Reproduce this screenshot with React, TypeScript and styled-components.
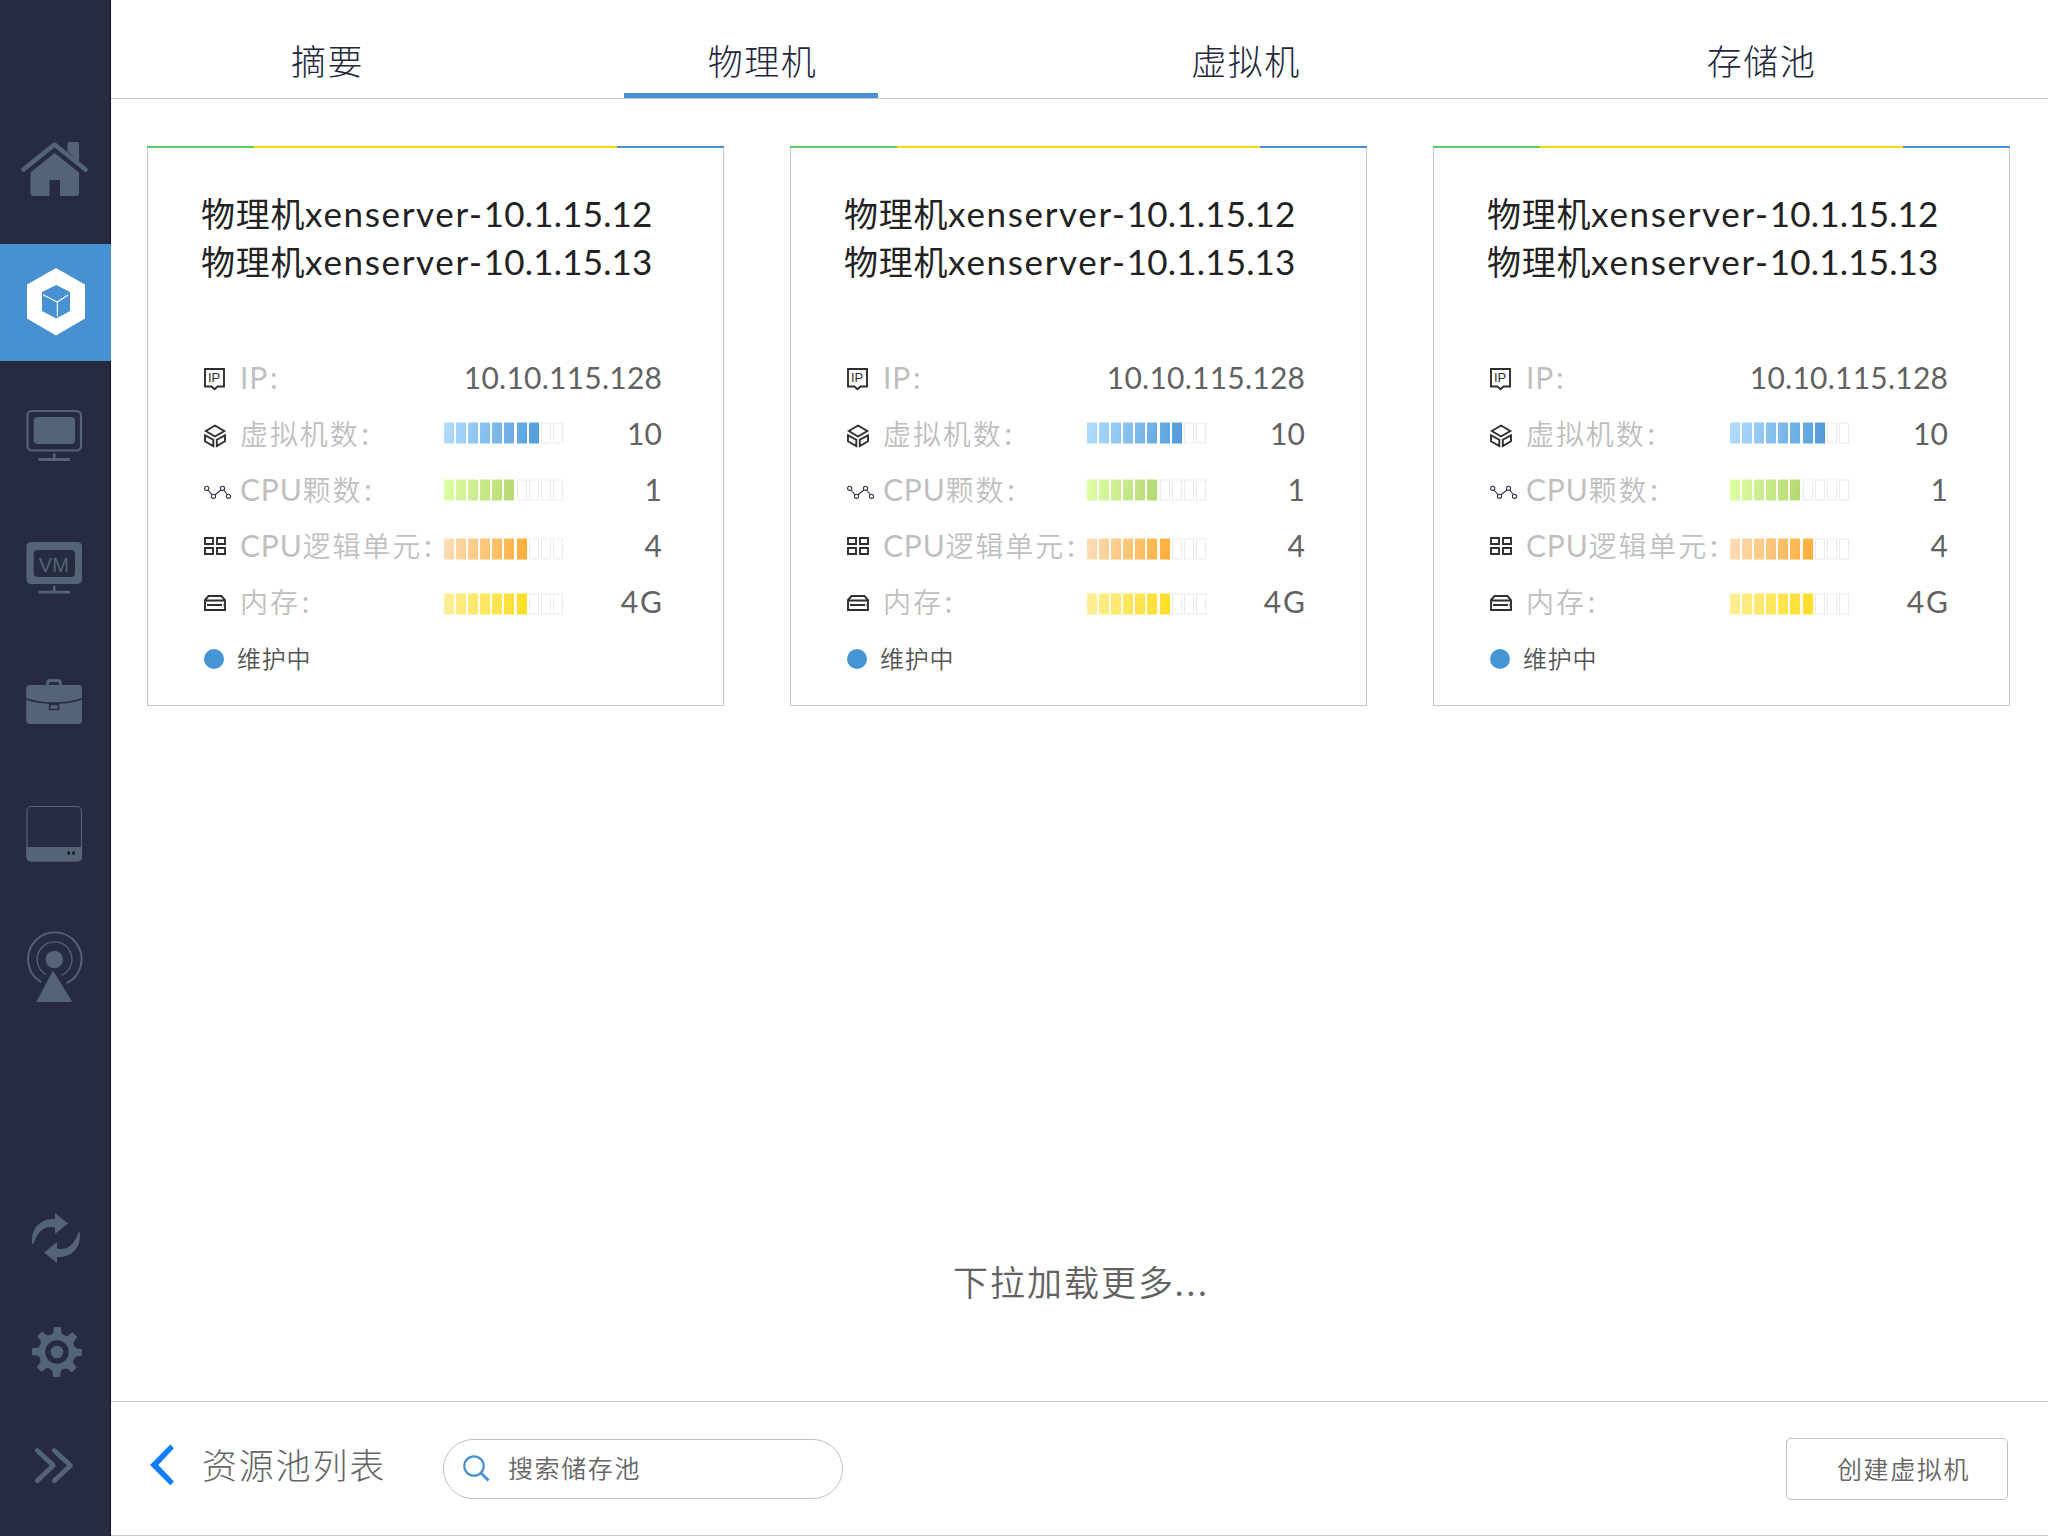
import React from 'react';
import styled, { createGlobalStyle } from 'styled-components';

const SLATE = '#546474';
const NAVY = '#262b40';
const BLUE = '#4791d3';
const LINE = '#c8c8c8';
const INK = '#2f2f2f';

const GlobalStyle = createGlobalStyle`
  * { box-sizing: border-box; }
  body {
    margin: 0;
    background: #fff;
    font-family: Lato, 'Noto Sans CJK SC', sans-serif;
    font-weight: 300;
  }
  svg { display: block; }
`;

const Screen = styled.div`
  display: flex;
  width: 2048px;
  height: 1536px;
  overflow: hidden;
`;

const Sidebar = styled.nav`
  display: flex;
  flex-direction: column;
  width: 111px;
  padding-top: 110px;
  background: linear-gradient(to right, ${NAVY} 110px, #10123a 110px);
`;

const NavItem = styled.a<{ $height: number; $active?: boolean }>`
  display: block;
  height: ${p => p.$height}px;
  background: ${p => (p.$active ? BLUE : 'transparent')};
`;

const Spacer = styled.div`
  flex: 1;
`;

const Main = styled.main`
  display: flex;
  flex-direction: column;
  flex: 1;
`;

const Tabs = styled.header`
  display: flex;
  height: 99px;
  padding-left: 88px;
  border-bottom: 1px solid ${LINE};
`;

const Tab = styled.button<{ $active?: boolean; $before: number; $indent?: number }>`
  width: 254px;
  margin-left: ${p => p.$before}px;
  padding: 27px 0 0 ${p => p.$indent ?? 0}px;
  border: 0;
  border-bottom: 5px solid ${p => (p.$active ? BLUE : 'transparent')};
  background: none;
  color: #23283c;
  font: 300 35px/40px 'Noto Sans CJK SC', sans-serif;
  letter-spacing: 1.5px;
  white-space: nowrap;
`;

const Content = styled.section`
  display: flex;
  flex-direction: column;
  justify-content: space-between;
  flex: 1;
  padding: 47px 38px 95px 36px;
`;

const Cards = styled.div`
  display: flex;
  gap: 66px;
`;

const Card = styled.article`
  width: 577px;
  height: 560px;
  border: 1px solid ${LINE};
  border-top-width: 0;
`;

const Stripe = styled.div`
  height: 2px;
  margin: 0 -1px;
  background: linear-gradient(to right, #58cf5e 107px, #ffd90a 107px 470px, ${BLUE} 470px);
`;

const Title = styled.h2`
  margin: 0;
  padding: 41px 0 0 53px;
  color: #222;
  font-family: 'Noto Sans CJK SC', sans-serif;
  font-size: 34px;
  font-weight: 400;
  line-height: 48px;
  letter-spacing: 0.7px;
  white-space: nowrap;
`;

const Latin = styled.span<{ $size: number; $spacing?: number }>`
  font-family: Lato, sans-serif;
  font-size: ${p => p.$size}px;
  font-weight: 400;
  line-height: 0;
  letter-spacing: ${p => p.$spacing ?? 0}px;
`;

const Stats = styled.div`
  padding: 64px 61px 0 56px;
`;

const Row = styled.div`
  display: grid;
  grid-template-columns: 36px 204px 1fr auto;
  align-items: center;
  height: 56px;
`;

const Label = styled.span`
  color: #bfbfbf;
  font-family: 'Noto Sans CJK SC', sans-serif;
  font-size: 28px;
  font-weight: 350;
  line-height: 56px;
  letter-spacing: 1.9px;
  white-space: nowrap;
`;

const Colon = styled(Latin)`
  margin-left: 2px;
`;

const Value = styled.span<{ $spacing?: number }>`
  margin-right: -${p => p.$spacing ?? 0.25}px;
  color: #626262;
  font-family: Lato, sans-serif;
  font-size: 30px;
  font-weight: 400;
  line-height: 56px;
  letter-spacing: ${p => p.$spacing ?? 0.25}px;
`;

const Meter = styled.div<{ $shift: number }>`
  display: flex;
  gap: 2px;
  height: 21px;
  transform: translateY(${p => p.$shift}px);
`;

const Cell = styled.i<{ $fill?: string }>`
  width: 10px;
  height: 21px;
  background: ${p => p.$fill ?? '#fff'};
  border: ${p => (p.$fill ? '0' : '1px solid #ebebeb')};
  &:nth-child(7) { margin-left: 1px; }
`;

const Status = styled.div`
  display: flex;
  align-items: center;
  gap: 13px;
  padding-left: 56px;
  height: 60px;
  color: #555;
  font-family: 'Noto Sans CJK SC', sans-serif;
  font-size: 24px;
  font-weight: 350;
  letter-spacing: 0.8px;
`;

const Dot = styled.span`
  width: 20px;
  height: 20px;
  border-radius: 50%;
  background: #4494d6;
`;

const Raised = styled.span<{ $by: number }>`
  padding-bottom: ${p => p.$by * 2}px;
`;

const LoadMore = styled.p`
  margin: 0;
  padding-left: 806px;
  color: #626262;
  font-family: 'Noto Sans CJK SC', sans-serif;
  font-size: 35px;
  font-weight: 350;
  line-height: 50px;
  letter-spacing: 2px;
`;

const Footer = styled.footer`
  display: flex;
  align-items: center;
  height: 135px;
  padding: 0 40px 0 39px;
  border-top: 1px solid ${LINE};
  border-bottom: 1px solid ${LINE};
`;

const Back = styled.a`
  display: flex;
  align-items: center;
  gap: 28px;
  width: 293px;
  padding-bottom: 8px;
  color: #666;
  font-family: 'Noto Sans CJK SC', sans-serif;
  font-size: 35px;
  line-height: 50px;
  letter-spacing: 1.8px;
`;

const Search = styled.label`
  display: flex;
  align-items: center;
  gap: 18px;
  width: 400px;
  height: 60px;
  padding-left: 19px;
  border: 1px solid #c0c0c0;
  border-radius: 30px;
  color: #666;
  font-family: 'Noto Sans CJK SC', sans-serif;
  font-size: 25px;
  font-weight: 350;
  letter-spacing: 1.6px;
`;

const Create = styled.button`
  width: 222px;
  height: 62px;
  margin-left: auto;
  padding: 0 0 2px 50px;
  border: 1px solid #c0c0c0;
  border-radius: 5px;
  background: none;
  color: #666;
  font: 350 25px/56px 'Noto Sans CJK SC', sans-serif;
  letter-spacing: 1.6px;
  text-align: left;
`;

/* Sidebar drawings share one coordinate space; `top` is where each slot starts. */
const Glyph = ({ top, height, children }: { top: number; height: number; children: React.ReactNode }) => (
  <svg width="111" height={height} viewBox={`0 ${top} 111 ${height}`} fill={SLATE}>
    {children}
  </svg>
);

const gearTeeth = [0, 45, 90, 135, 180, 225, 270, 315];
const syncArrow = 'M55 1213L68 1223.500L55 1234V1227.300C42 1225.500 37 1234 33.500 1243.800H32.200C30.500 1228 41 1218 55 1219Z';

const glyphs = {
  home: (
    <>
      <path d="M23.5 169.500L54.500 144.500L85.500 169.500" fill="none" stroke={SLATE} strokeWidth="4.600" strokeLinecap="round" strokeLinejoin="round" />
      <path d="M67.500 151V143.500Q67.500 142 69 142H77Q79 142 79 144V162Z" />
      <path d="M54.500 153L79 172.500V193.500Q79 196 76.500 196H60V180H49.500V196H33Q30.500 196 30.500 193.500V172.500Z" />
    </>
  ),
  pool: (
    <>
      <path d="M56 268L85 284.500V318.500L56 335.500L27 318.500V284.500Z" fill="#fff" />
      <path d="M56.300 285L70 292V311L56.300 318.500L42 311V292Z" fill={BLUE} />
      <path d="M43 294.700L57.300 302L68 295M57.300 302V316.500" fill="none" stroke="#fff" strokeWidth="1.100" />
    </>
  ),
  monitor: (
    <>
      <rect x="27.500" y="411" width="53.500" height="39.500" rx="4.500" fill="none" stroke={SLATE} strokeWidth="2.200" />
      <rect x="33.700" y="417" width="41.300" height="27" rx="4" />
      <path d="M53 453.500H55.500V458H70V461H38.500V458H53Z" />
    </>
  ),
  vm: (
    <>
      <path fillRule="evenodd" d="M31.500 542H77Q82 542 82 547V579Q82 584 77 584H31.500Q26.500 584 26.500 579V547Q26.500 542 31.500 542ZM37.700 550Q33.700 550 33.700 554V573Q33.700 577 37.700 577H71Q75 577 75 573V554Q75 550 71 550Z" />
      <path d="M53 586H55.500V590.700H70V593.500H38.500V590.700H53Z" />
      <text x="38.800" y="572" fontFamily="Liberation Sans, sans-serif" fontSize="20" fontWeight="400">VM</text>
    </>
  ),
  briefcase: (
    <>
      <path d="M47.500 686V683.500Q47.500 680.500 50.500 680.500H57.500Q60.500 680.500 60.500 683.500V686" fill="none" stroke={SLATE} strokeWidth="2.800" />
      <rect x="26.200" y="685" width="55.800" height="39" rx="3" />
      <path d="M26 699Q54 707.500 82 699" fill="none" stroke={NAVY} strokeWidth="1.800" />
      <path d="M49.700 704.500H58.500V709.500H49.700Z" stroke={NAVY} strokeWidth="1.700" />
    </>
  ),
  drive: (
    <>
      <rect x="27" y="806.500" width="54.500" height="54.500" rx="4.500" fill="none" stroke={SLATE} strokeWidth="1.200" />
      <path d="M26.400 847H82V857Q82 861.500 77.500 861.500H31Q26.400 861.500 26.400 857Z" />
      <path d="M67.500 851.500H70V854.500H67.500ZM72.300 851.500H74.800V854.500H72.300Z" fill="#11151f" />
    </>
  ),
  antenna: (
    <>
      <circle cx="54.300" cy="959.500" r="8.700" />
      <path d="M46 974.500A17.400 17.400 0 1 1 61.500 975.300" fill="none" stroke={SLATE} strokeWidth="1.300" />
      <path d="M41.300 982.300A26.800 26.800 0 1 1 66.700 983.200" fill="none" stroke={SLATE} strokeWidth="1.900" />
      <path d="M53 970.500L72.300 1002H36.200Z" />
    </>
  ),
  sync: (
    <>
      <path d={syncArrow} />
      <path transform="rotate(180 56 1238)" d={syncArrow} />
    </>
  ),
  gear: (
    <>
      {gearTeeth.map(a => (
        <path key={a} transform={`rotate(${a} 57 1352)`} d="M53.700 1328Q53.700 1327 54.700 1327H60Q61 1327 61 1328L61.300 1332Q61.700 1334.500 65 1335.500L60 1342H54L49 1335.500Q53 1334.500 53.400 1332Z" />
      ))}
      <circle cx="57" cy="1352" r="14.700" fill="none" stroke={SLATE} strokeWidth="6" />
      <circle cx="57" cy="1352" r="11.700" fill={NAVY} />
      <circle cx="57" cy="1352" r="6.300" />
    </>
  ),
  expand: (
    <path d="M37.300 1450.500L53.300 1465.500L37.300 1480.700M54.300 1450.500L70.500 1465.500L54.300 1480.700" fill="none" stroke={SLATE} strokeWidth="4.800" strokeLinecap="round" strokeLinejoin="round" />
  ),
};

const upperNav: { key: keyof typeof glyphs; top: number; height: number }[] = [
  { key: 'home', top: 110, height: 134 },
  { key: 'pool', top: 244, height: 117 },
  { key: 'monitor', top: 361, height: 139 },
  { key: 'vm', top: 500, height: 136 },
  { key: 'briefcase', top: 636, height: 134 },
  { key: 'drive', top: 770, height: 130 },
  { key: 'antenna', top: 900, height: 134 },
];

const lowerNav: typeof upperNav = [
  { key: 'sync', top: 1190, height: 100 },
  { key: 'gear', top: 1290, height: 110 },
  { key: 'expand', top: 1400, height: 136 },
];

const RowIcon = ({ children }: { children: React.ReactNode }) => (
  <svg width="28" height="32" viewBox="0 0 28 32" fill="none" stroke={INK} strokeWidth="1.900">
    {children}
  </svg>
);

const rowIcons = {
  ip: (
    <RowIcon>
      <path d="M1 8H20V25.500H13.500L10.500 28.300L7.500 25.500H1Z" />
      <text x="4" y="21.300" fill={INK} stroke="none" fontFamily="Liberation Sans, sans-serif" fontSize="13" fontWeight="400">IP</text>
    </RowIcon>
  ),
  vm: (
    <RowIcon>
      <path d="M11 8.500L20.300 14L11 19.500L1.800 14Z M1 18.300L9.300 22.700V29L1 24.300Z M21 18.300L12.800 22.700V29L21 24.300Z" />
    </RowIcon>
  ),
  cpu: (
    <RowIcon>
      <g stroke="#30364e" strokeWidth="1.100">
        <circle cx="2.700" cy="15.300" r="2.100" />
        <circle cx="9.500" cy="23.300" r="2.100" />
        <circle cx="18.500" cy="15.300" r="2.100" />
        <circle cx="24.500" cy="23.300" r="2.100" />
        <path d="M4 17L8 21.700M11 21.700L17 17M19.700 17L23.300 21.500" />
      </g>
    </RowIcon>
  ),
  units: (
    <RowIcon>
      <path d="M1 9H9V15H1ZM13 9H21V15H13ZM1 19H9V25H1ZM13 19H21V25H13Z" />
    </RowIcon>
  ),
  memory: (
    <RowIcon>
      <path d="M1 15L4.500 11H17.500L21 15V25H1ZM1 15.500H21M3 20H18M19.500 20H21" />
    </RowIcon>
  ),
};

interface Stat {
  icon: keyof typeof rowIcons;
  latin?: string;
  text?: string;
  value: string;
  spacing?: number;
  meter?: { from: number[]; to: number[]; filled: number; shift: number };
}

const stats: Stat[] = [
  { icon: 'ip', latin: 'IP', value: '10.10.115.128' },
  { icon: 'vm', text: '虚拟机数', value: '10', meter: { from: [178, 221, 255], to: [80, 155, 217], filled: 8, shift: -0.5 } },
  { icon: 'cpu', latin: 'CPU', text: '颗数', value: '1', meter: { from: [221, 255, 165], to: [179, 217, 115], filled: 6, shift: 0.5 } },
  { icon: 'units', latin: 'CPU', text: '逻辑单元', value: '4', meter: { from: [253, 221, 184], to: [253, 174, 56], filled: 7, shift: 3.5 } },
  { icon: 'memory', text: '内存', value: '4G', spacing: 2, meter: { from: [255, 238, 152], to: [255, 222, 34], filled: 7, shift: 2.5 } },
];

const tone = (from: number[], to: number[], t: number) =>
  `rgb(${from.map((c, i) => Math.round(c + (to[i] - c) * t)).join(',')})`;

const cellFill = (m: NonNullable<Stat['meter']>, i: number) =>
  i < m.filled
    ? `linear-gradient(100deg, ${tone(m.from, m.to, i / m.filled)}, ${tone(m.from, m.to, (i + 1) / m.filled)})`
    : undefined;

const HostCard = () => (
  <Card>
    <Stripe />
    <Title>
      {['10.1.15.12', '10.1.15.13'].map(ip => (
        <div key={ip}>
          物理机<Latin $size={35} $spacing={1.65}>xenserver-</Latin><Latin $size={35} $spacing={0.2}>{ip}</Latin>
        </div>
      ))}
    </Title>
    <Stats>
      {stats.map(s => (
        <Row key={s.icon}>
          {rowIcons[s.icon]}
          <Label>
            {s.latin && <Latin $size={30} $spacing={0.8}>{s.latin}</Latin>}
            {s.text}
            <Colon $size={30}>:</Colon>
          </Label>
          {s.meter ? (
            <Meter $shift={s.meter.shift}>
              {Array.from({ length: 10 }, (_, i) => (
                <Cell key={i} $fill={cellFill(s.meter!, i)} />
              ))}
            </Meter>
          ) : (
            <span />
          )}
          <Value $spacing={s.spacing}>{s.value}</Value>
        </Row>
      ))}
    </Stats>
    <Status><Dot /><Raised $by={2}>维护中</Raised></Status>
  </Card>
);

export default function App() {
  return (
    <>
      <GlobalStyle />
      <Screen>
        <Sidebar>
          {upperNav.map(n => (
            <NavItem key={n.key} $height={n.height} $active={n.key === 'pool'}>
              <Glyph top={n.top} height={n.height}>{glyphs[n.key]}</Glyph>
            </NavItem>
          ))}
          <Spacer />
          {lowerNav.map(n => (
            <NavItem key={n.key} $height={n.height}>
              <Glyph top={n.top} height={n.height}>{glyphs[n.key]}</Glyph>
            </NavItem>
          ))}
        </Sidebar>
        <Main>
          <Tabs>
            <Tab $before={0} $indent={3}>摘要</Tab>
            <Tab $before={171} $indent={23} $active>物理机</Tab>
            <Tab $before={241}>虚拟机</Tab>
            <Tab $before={261} $indent={1}>存储池</Tab>
          </Tabs>
          <Content>
            <Cards>
              <HostCard />
              <HostCard />
              <HostCard />
            </Cards>
            <LoadMore>下拉加载更多<Latin $size={35} $spacing={3.4}>...</Latin></LoadMore>
          </Content>
          <Footer>
            <Back>
              <svg width="24" height="42" viewBox="0 0 24 42">
                <path d="M20.300 0.700L23.700 4.200L8 21L23.700 37.500L20.300 41L0.300 21Z" fill="#0f7dff" stroke="#0f7dff" strokeWidth="0.500" strokeLinejoin="round" />
              </svg>
              <Raised $by={1}>资源池列表</Raised>
            </Back>
            <Search>
              <svg width="27" height="27" viewBox="0 0 27 27" fill="none" stroke={BLUE}>
                <circle cx="11" cy="11" r="9.700" strokeWidth="2.200" />
                <path d="M18 18L25.500 25.500" strokeWidth="2.800" />
              </svg>
              <Raised $by={2}>搜索储存池</Raised>
            </Search>
            <Create>创建虚拟机</Create>
          </Footer>
        </Main>
      </Screen>
    </>
  );
}
